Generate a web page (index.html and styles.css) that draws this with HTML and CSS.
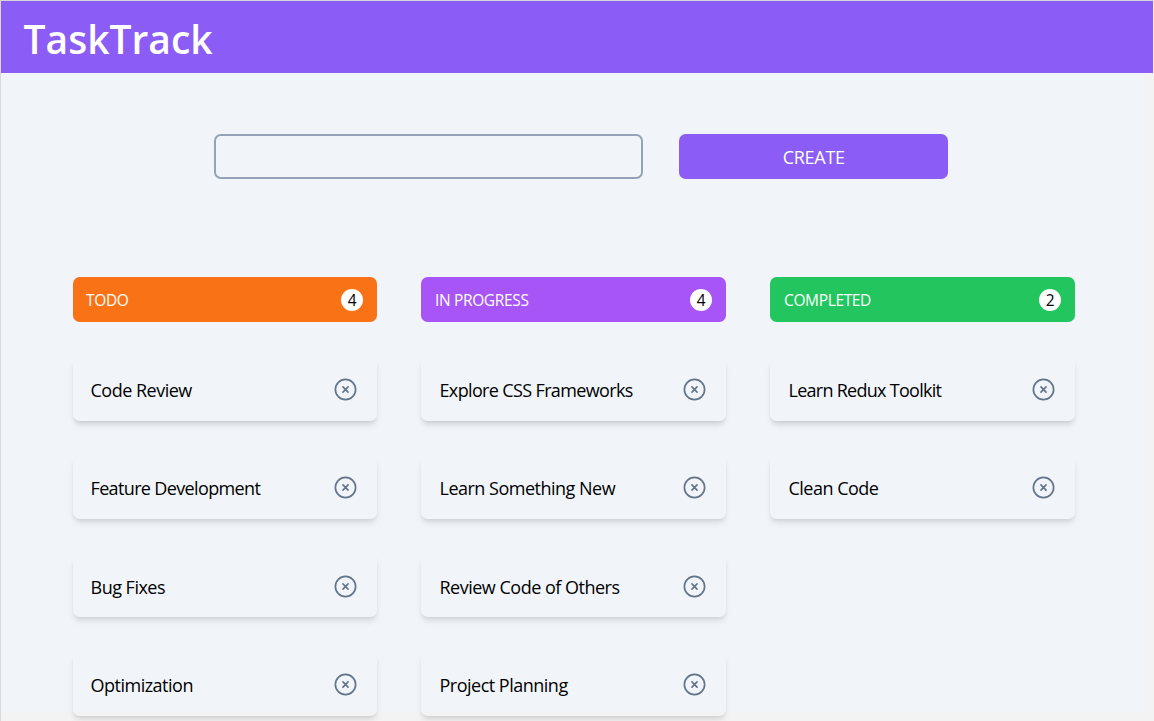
FILE: index.html
```
<!DOCTYPE html>
<html lang="en">
<head>
<meta charset="utf-8">
<title>TaskTrack</title>
<link rel="stylesheet" href="styles.css">
</head>
<body>
<svg class="defs" width="0" height="0"><symbol id="x-circle" viewBox="0 0 24 24"><path d="M9.75 9.75l4.5 4.5m0-4.5l-4.5 4.5M21 12a9 9 0 11-18 0 9 9 0 0118 0z" fill="none" stroke="currentColor" stroke-width="1.5" stroke-linecap="round" stroke-linejoin="round"/></symbol></svg>
<div class="window">
<header class="navbar"><h1 class="brand">TaskTrack</h1></header>
<main class="page">
<form class="create"><input class="create-input" type="text" aria-label="Task"><button class="create-button" type="button">CREATE</button></form>
<div class="board">
<section class="column">
<h2 class="column-head todo"><span>TODO</span><span class="count">4</span></h2>
<article class="card"><p>Code Review</p><svg class="icon"><use href="#x-circle"/></svg></article>
<article class="card"><p class="tight">Feature Development</p><svg class="icon"><use href="#x-circle"/></svg></article>
<article class="card"><p>Bug Fixes</p><svg class="icon"><use href="#x-circle"/></svg></article>
<article class="card"><p>Optimization</p><svg class="icon"><use href="#x-circle"/></svg></article>
</section>
<section class="column">
<h2 class="column-head progress"><span>IN PROGRESS</span><span class="count">4</span></h2>
<article class="card"><p class="tight">Explore CSS Frameworks</p><svg class="icon"><use href="#x-circle"/></svg></article>
<article class="card"><p>Learn Something New</p><svg class="icon"><use href="#x-circle"/></svg></article>
<article class="card"><p>Review Code of Others</p><svg class="icon"><use href="#x-circle"/></svg></article>
<article class="card"><p>Project Planning</p><svg class="icon"><use href="#x-circle"/></svg></article>
</section>
<section class="column">
<h2 class="column-head completed"><span>COMPLETED</span><span class="count">2</span></h2>
<article class="card"><p class="tighter">Learn Redux Toolkit</p><svg class="icon"><use href="#x-circle"/></svg></article>
<article class="card"><p>Clean Code</p><svg class="icon"><use href="#x-circle"/></svg></article>
</section>
</div>
</main>
</div>
</body>
</html>
```
FILE: styles.css
```
* { box-sizing: border-box; }
body { margin: 0; height: 721px; overflow: hidden; background: #f3f3f3; font-family: "Segoe UI", "Open Sans", "Noto Sans", sans-serif; color: #000; }
h1, h2, p { margin: 0; font-weight: 400; }
.defs { display: none; }
.window { height: 721px; border-top: 1px solid #d6d6d6; border-left: 1px solid #d9d9d9; padding-right: 1px; }
.navbar { height: 72px; background: #8b5cf6; padding-left: 22.5px; display: flex; align-items: center; }
.brand { font-size: 39px; line-height: 45px; font-weight: 650; color: #fff; letter-spacing: 0; padding-top: 3px; }
.page { height: 639px; margin-right: 8px; padding: 61.3px 0 0 71.5px; background: #f1f5f9; }
.create { display: flex; gap: 36px; padding-left: 141px; }
.create-input { width: 429.5px; height: 44.7px; padding: 4px; border: 2px solid #94a3b8; border-radius: 6.7px; background: #f1f5f9; }
.create-button { width: 268.5px; height: 44.7px; padding: 0 0 0 1px; border: 0; border-radius: 6.7px; background: #8b5cf6; color: #fff; font: 400 18px/24px "Segoe UI", "Open Sans", sans-serif; letter-spacing: -0.3px; }
.board { display: flex; gap: 44.7px; padding-top: 98.5px; }
.column { width: 304.3px; display: flex; flex-direction: column; gap: 35.8px; }
.column-head { height: 44.7px; display: flex; align-items: center; justify-content: space-between; padding: 0 13.5px; border-radius: 6.7px; color: #fff; font-size: 15.5px; letter-spacing: -0.35px; }
.column-head > span:first-child { padding-top: 1px; }
.todo { background: #f97316; }
.progress { background: #a855f7; }
.completed { background: #22c55e; }
.count { width: 22.4px; height: 22.4px; border-radius: 50%; background: #fff; color: #000; display: flex; align-items: center; justify-content: center; padding-top: 1px; letter-spacing: 0; }
.card { height: 62.6px; padding: 0 18px; display: flex; align-items: center; justify-content: space-between; border-radius: 6.7px; box-shadow: 0 4.5px 6.7px -1px rgba(0,0,0,.1), 0 2.2px 4.5px -2.2px rgba(0,0,0,.1); font-size: 18px; letter-spacing: -0.5px; }
.card p { padding-top: 1px; }
.card .tight { letter-spacing: -0.64px; }
.card .tighter { letter-spacing: -0.72px; }
.icon { width: 27px; height: 27px; color: #64748b; }
```
